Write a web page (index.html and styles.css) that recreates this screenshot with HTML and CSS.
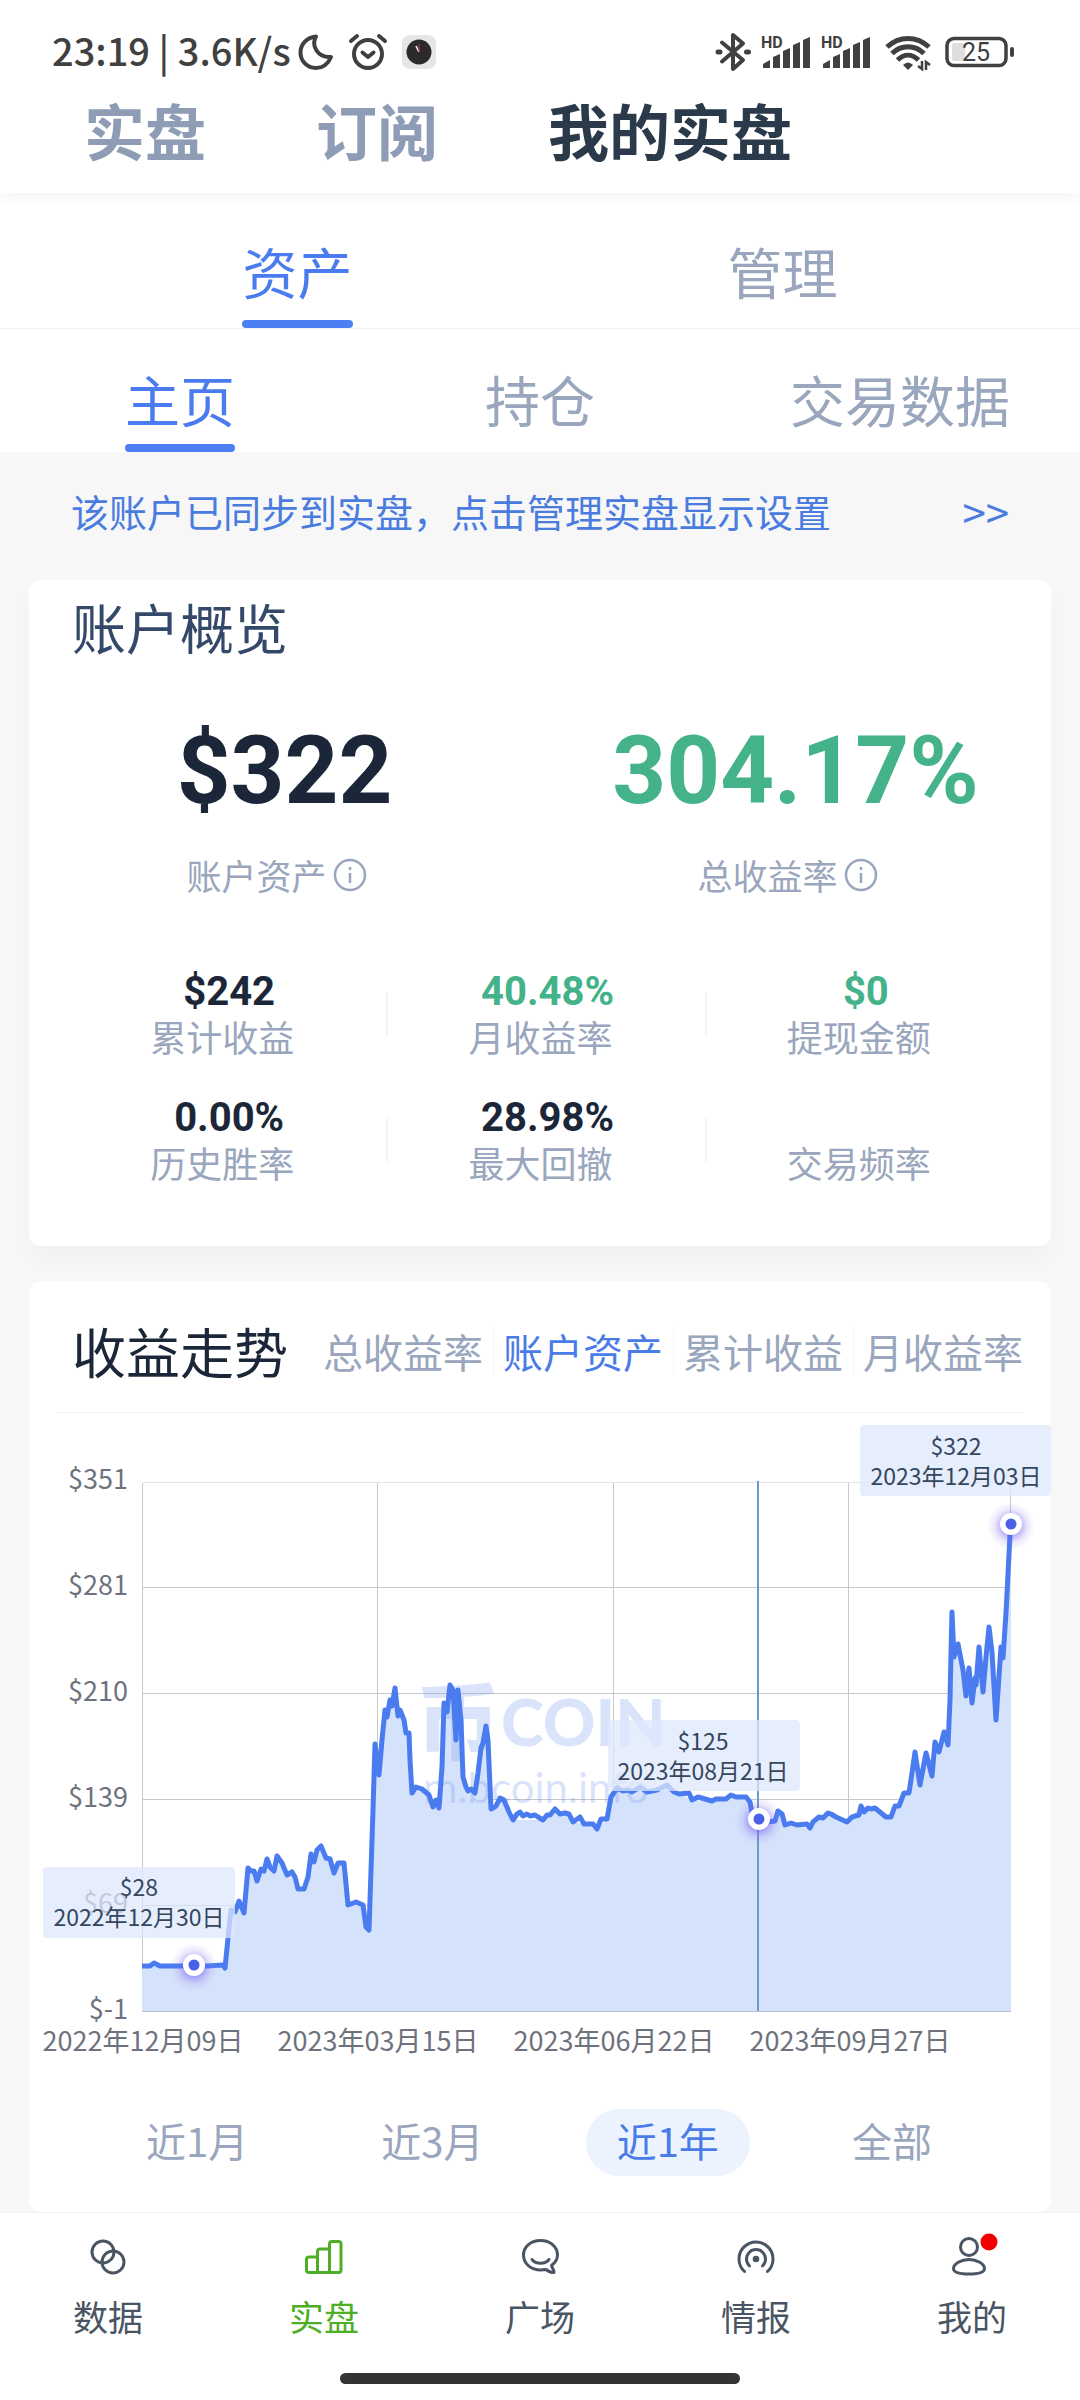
FILE: index.html
```html
<!DOCTYPE html>
<html lang="zh-CN">
<head>
<meta charset="utf-8">
<meta name="viewport" content="width=device-width, initial-scale=1">
<title>我的实盘</title>
<link rel="stylesheet" href="styles.css">
</head>
<body>
<header class="header">
  <div class="status">
    <span class="status-text">23:19 | 3.6K/s</span>
    <div class="status-left">
      <svg width="36" height="38" viewBox="0 0 36 38" fill="none" stroke="#404040" stroke-width="4" stroke-linejoin="round"><path d="M18 3.5C13 12 19 25 33 24C30 31 25 35 18 35C9 35 2.500 28 2.500 19.500C2.500 11 9 4.500 18 3.500Z"/></svg>
      <svg width="40" height="38" viewBox="0 0 40 38" fill="none" stroke="#404040" stroke-width="4" stroke-linecap="round" stroke-linejoin="round"><circle cx="20" cy="21" r="14"/><path d="M14.500 19.500L20 24L25.500 19.500M3 8L9 3M37 8L31 3"/></svg>
      <svg width="34" height="38" viewBox="0 0 34 38"><rect y="2" width="34" height="34" rx="8" fill="#e6e6e6"/><circle cx="17" cy="19" r="12.500" fill="#2c2a2a"/><path d="M17 19L14 13" stroke="#fff" stroke-width="1.500"/><path d="M17 19V11" stroke="#c33" stroke-width="1"/></svg>
    </div>
    <div class="status-right">
      <svg width="36" height="40" viewBox="0 0 36 40" fill="none" stroke="#404040" stroke-width="4" stroke-linecap="round" stroke-linejoin="round"><path d="M7 10.500L28 28L18 37V3L28 11.500L7 29.500"/><path d="M3 20H5M31.500 20H33.500" stroke-width="5"/></svg>
      <svg width="50" height="40" viewBox="0 0 50 40" fill="#404040"><text x="0" y="16" class="hd">HD</text><path d="M2 36V32L9 28V36ZM12 36V25L19 22V36ZM22 36V19L29 16V36ZM32 36V13L39 10V36ZM42 36V8L49 5V36Z"/></svg>
      <svg width="50" height="40" viewBox="0 0 50 40" fill="#404040"><text x="0" y="16" class="hd">HD</text><path d="M2 36V32L9 28V36ZM12 36V25L19 22V36ZM22 36V19L29 16V36ZM32 36V13L39 10V36ZM42 36V8L49 5V36Z"/></svg>
      <svg class="wifi" width="46" height="40" viewBox="0 0 46 40" fill="none" stroke="#404040" stroke-width="5"><path d="M2 15C14 3.500 32 3.500 44 15M7 21.500C16 12.500 30 12.500 39 21.500M12.500 28C19 21.500 27 21.500 33.500 28"/><path d="M23 38L18 33Q23 28 28 33Z" fill="#404040" stroke="none"/><path d="M37 29V37L33 34M41 38V30L45 33" stroke-width="2.500"/></svg>
      <svg width="70" height="40" viewBox="0 0 70 40"><rect x="2" y="6.500" width="59" height="27" rx="7" fill="none" stroke="#404040" stroke-width="3.500"/><rect x="7" y="11" width="13" height="18" rx="2" fill="#dedede"/><rect x="65" y="15" width="4" height="10" rx="2" fill="#404040"/><text x="31" y="29" text-anchor="middle" class="batt">25</text></svg>
    </div>
  </div>
  <nav class="sections">
    <button type="button">实盘</button>
    <button type="button">订阅</button>
    <button type="button" class="active">我的实盘</button>
  </nav>
</header>

<nav class="tabs tabs-main">
  <button type="button" class="active"><span>资产</span></button>
  <button type="button"><span>管理</span></button>
</nav>
<nav class="tabs tabs-sub">
  <button type="button" class="active"><span>主页</span></button>
  <button type="button"><span>持仓</span></button>
  <button type="button"><span>交易数据</span></button>
</nav>

<main>
  <a href="#" class="notice"><span>该账户已同步到实盘，点击管理实盘显示设置</span><span class="more">&gt;&gt;</span></a>

  <section class="card overview">
    <h2 class="card-title">账户概览</h2>
    <div class="hero">
      <div class="hero-item">
        <strong>$322</strong>
        <p>账户资产<svg width="34" height="34" viewBox="0 0 34 34" fill="none" stroke="#99a6bd" stroke-width="2.500"><circle cx="17" cy="17" r="15"/><path d="M17 15V25M17 9V12"/></svg></p>
      </div>
      <div class="hero-item up">
        <strong>304.17%</strong>
        <p>总收益率<svg width="34" height="34" viewBox="0 0 34 34" fill="none" stroke="#99a6bd" stroke-width="2.500"><circle cx="17" cy="17" r="15"/><path d="M17 15V25M17 9V12"/></svg></p>
      </div>
    </div>
    <div class="stats">
      <div class="stat"><strong>$242</strong><span>累计收益</span></div>
      <div class="stat up"><strong>40.48%</strong><span>月收益率</span></div>
      <div class="stat up"><strong>$0</strong><span>提现金额</span></div>
      <div class="stat"><strong>0.00%</strong><span>历史胜率</span></div>
      <div class="stat"><strong>28.98%</strong><span>最大回撤</span></div>
      <div class="stat"><strong></strong><span>交易频率</span></div>
    </div>
  </section>

  <section class="card trend">
    <div class="trend-head">
      <h2 class="trend-title">收益走势</h2>
      <div class="metrics">
        <button type="button">总收益率</button>
        <button type="button" class="active">账户资产</button>
        <button type="button">累计收益</button>
        <button type="button">月收益率</button>
      </div>
    </div>
    <hr>
    <svg class="chart" viewBox="29 1413 1022 660" role="img" aria-label="账户资产走势">
      <defs>
        <radialGradient id="glow"><stop offset="0.400" stop-color="#6a4ff0" stop-opacity="0.450"/><stop offset="0.700" stop-color="#7c68f2" stop-opacity="0.150"/><stop offset="1" stop-color="#8a7cf5" stop-opacity="0"/></radialGradient>
        <g id="dot"><circle cy="2" r="24" fill="url(#glow)"/><circle r="11" fill="#fff"/><circle r="5.500" fill="#4a60e6"/></g>
        <path id="series" d="M142 1966L150 1966L154 1963L160 1966L182 1966L207 1966L223 1965L225 1968L228 1938L231 1910L235 1912L239 1901L244 1913L248 1868L251 1871L254 1871L257 1881L261 1869L264 1871L267 1859L270 1867L274 1871L277 1856L282 1863L287 1875L292 1872L295 1877L298 1889L304 1889L308 1877L311 1854L314 1862L317 1850L321 1846L326 1858L330 1859L334 1873L338 1863L344 1863L348 1905L356 1902L363 1905L366 1927L369 1930L373 1810L375 1744L379 1775L382 1740L385 1710L387 1717L390 1700L392 1706L395 1688L398 1716L400 1710L404 1720L406 1733L409 1733L410 1760L412 1793L416 1787L422 1789L429 1795L433 1807L436 1800L439 1808L442 1767L444 1703L447 1712L450 1685L453 1690L456 1740L458 1690L461 1720L463 1777L466 1787L468 1791L471 1789L475 1793L478 1773L481 1748L483 1743L486 1726L488 1740L491 1809L496 1806L500 1798L504 1800L509 1812L513 1820L517 1814L520 1812L523 1816L527 1814L530 1816L535 1815L538 1817L543 1820L547 1815L550 1815L555 1809L560 1814L565 1813L569 1814L573 1822L580 1817L584 1824L593 1824L597 1829L601 1819L607 1819L611 1797L617 1788L623 1791L628 1790L632 1792L640 1787L647 1792L657 1790L667 1785L674 1792L679 1794L689 1793L692 1800L698 1797L712 1801L716 1799L726 1799L731 1795L736 1797L746 1797L750 1802L752 1813L758 1819L767 1822L775 1821L778 1811L782 1814L785 1825L791 1823L797 1825L807 1824L810 1828L813 1822L819 1817L823 1818L828 1813L831 1814L836 1817L847 1822L852 1817L859 1815L861 1806L864 1812L868 1808L871 1809L875 1808L886 1817L891 1817L895 1806L899 1806L904 1793L909 1793L912 1773L915 1752L920 1785L926 1753L932 1776L935 1742L939 1752L944 1732L948 1745L950 1700L951 1653L952 1612L954 1657L958 1644L963 1670L966 1696L969 1668L972 1703L975 1678L976 1685L979 1647L983 1692L986 1657L989 1627L992 1652L996 1720L1001 1647L1003 1658L1006 1613L1010 1535L1011 1524"/>
      </defs>
      <path class="grid" d="M142 1587.500H1011M142 1693.500H1011M142 1799.500H1011M142 1905.500H1011M142.500 1482V2011M377.500 1482V2011M613.500 1482V2011M848.500 1482V2011M1010.500 1482V2011"/>
      <path class="grid-top" d="M142 1482.500H1011"/>
      <path class="area" d="M142 1966L150 1966L154 1963L160 1966L182 1966L207 1966L223 1965L225 1968L228 1938L231 1910L235 1912L239 1901L244 1913L248 1868L251 1871L254 1871L257 1881L261 1869L264 1871L267 1859L270 1867L274 1871L277 1856L282 1863L287 1875L292 1872L295 1877L298 1889L304 1889L308 1877L311 1854L314 1862L317 1850L321 1846L326 1858L330 1859L334 1873L338 1863L344 1863L348 1905L356 1902L363 1905L366 1927L369 1930L373 1810L375 1744L379 1775L382 1740L385 1710L387 1717L390 1700L392 1706L395 1688L398 1716L400 1710L404 1720L406 1733L409 1733L410 1760L412 1793L416 1787L422 1789L429 1795L433 1807L436 1800L439 1808L442 1767L444 1703L447 1712L450 1685L453 1690L456 1740L458 1690L461 1720L463 1777L466 1787L468 1791L471 1789L475 1793L478 1773L481 1748L483 1743L486 1726L488 1740L491 1809L496 1806L500 1798L504 1800L509 1812L513 1820L543 1820L555 1809L569 1814L573 1822L584 1824L597 1829L607 1819L611 1797L617 1788L647 1792L667 1785L679 1794L692 1800L712 1801L731 1795L746 1797L752 1813L758 1819L775 1821L778 1811L785 1825L810 1828L828 1813L847 1822L861 1806L875 1808L886 1817L891 1817L895 1806L899 1806L904 1793L909 1793L915 1752L920 1785L926 1753L932 1776L935 1742L939 1752L944 1732L948 1745L950 1700L952 1612L954 1657L958 1644L966 1696L969 1668L972 1703L979 1647L983 1692L989 1627L992 1652L996 1720L1001 1647L1003 1658L1006 1613L1011 1524V2011H142Z"/>
      <path class="axis" d="M142 2011.500H1011"/>
      <g class="mark">
        <text x="416" y="1753" class="mark-cjk">币</text>
        <text x="501" y="1746" class="mark-logo">COIN</text>
        <text x="423" y="1803" class="mark-url">m.bcoin.info</text>
      </g>
      <use href="#series" class="line"/>
      <path class="cursor" d="M758 1481V2011"/>
      <g class="tick tick-y">
        <text x="128" y="1489">$351</text><text x="128" y="1595">$281</text><text x="128" y="1701">$210</text>
        <text x="128" y="1807">$139</text><text x="128" y="1913">$69</text><text x="128" y="2019">$-1</text>
      </g>
      <g class="tick tick-x">
        <text x="143" y="2051">2022年12月09日</text><text x="378" y="2051">2023年03月15日</text>
        <text x="614" y="2051">2023年06月22日</text><text x="850" y="2051">2023年09月27日</text>
      </g>
      <use href="#dot" x="194" y="1965"/><use href="#dot" x="759" y="1819"/><use href="#dot" x="1011" y="1524"/>
      <g class="tip">
        <rect x="43" y="1867" width="192" height="71" rx="4"/><text x="139" y="1896">$28</text><text x="139" y="1926">2022年12月30日</text>
        <rect x="608" y="1720" width="192" height="71" rx="4"/><text x="703" y="1750">$125</text><text x="703" y="1780">2023年08月21日</text>
        <rect x="860" y="1425" width="191" height="71" rx="4"/><text x="956" y="1455">$322</text><text x="956" y="1485">2023年12月03日</text>
      </g>
    </svg>
    <div class="ranges">
      <button type="button">近1月</button>
      <button type="button">近3月</button>
      <button type="button" class="active">近1年</button>
      <button type="button">全部</button>
    </div>
  </section>
</main>

<footer class="footer">
  <nav class="bottom-nav">
    <a href="#"><svg width="40" height="40" viewBox="0 0 40 40"><circle cx="15" cy="15" r="11"/><circle cx="25" cy="25" r="11"/></svg>数据</a>
    <a href="#" class="active"><svg width="40" height="40" viewBox="0 0 40 40"><path d="M13.500 35.500H5Q2.500 35.500 2.500 33V22.500Q2.500 20 5 20H13.500ZM13.500 35.500V14.500Q13.500 12 16 12H25.500V35.500ZM25.500 35.500V7Q25.500 4.500 28 4.500H34.500Q37 4.500 37 7V33Q37 35.500 34.500 35.500Z"/></svg>实盘</a>
    <a href="#"><svg width="40" height="40" viewBox="0 0 40 40"><path d="M31.500 28.500C35.500 25.500 37.500 22 37.500 18C37.500 9.500 30 3.500 20.500 3.500C11 3.500 3.500 9.500 3.500 18C3.500 27 11.500 33 20.500 33C22 33 24 32.500 26 32.500C29 35 31.500 35.500 34 35.500C35 33.500 32 31.500 31.500 28.500Z"/><path d="M12 22.500C16 27.500 25 27.500 29 22.500"/></svg>广场</a>
    <a href="#"><svg width="40" height="40" viewBox="0 0 40 40"><path d="M8.500 34.500A17 17 0 1 1 31.500 34.500M13.500 29A9.500 9.500 0 1 1 26.500 29"/><circle cx="20" cy="22" r="3.300" class="solid"/></svg>情报</a>
    <a href="#"><svg width="40" height="40" viewBox="0 0 40 40"><circle cx="17" cy="10" r="8.500"/><path d="M17 22.500C25 22.500 32.500 27 32.500 31.500C32.500 35.500 26 37 17 37C8 37 1.500 35.500 1.500 31.500C1.500 27 9 22.500 17 22.500Z"/><circle cx="37" cy="5" r="8.500" class="badge"/></svg>我的</a>
  </nav>
  <div class="home-bar"></div>
</footer>
</body>
</html>
```

FILE: styles.css
```css
* { box-sizing: border-box; }
body {
  margin: 0;
  background: #f7f7f7;
  color: #1b2738;
  font-family: "Noto Sans CJK SC", sans-serif;
}
button {
  margin: 0;
  padding: 0;
  border: 0;
  background: none;
  color: inherit;
  font: inherit;
  white-space: nowrap;
}
a { color: inherit; text-decoration: none; }
h2, p { margin: 0; font-weight: 400; }
svg { display: block; flex: none; overflow: visible; }

.header {
  position: relative;
  padding: 32px 0 15px;
  background: #fff;
  box-shadow: 0 4px 14px rgba(0, 0, 0, 0.05);
}
.status {
  display: flex;
  align-items: center;
  height: 40px;
  margin-bottom: 16px;
  padding: 0 65px 0 52px;
  color: #404040;
}
.status-text { font-size: 38px; font-weight: 500; line-height: 36px; height: 40px; white-space: nowrap; }
.status-left { display: flex; gap: 14px; margin-left: 7px; }
.status-right { display: flex; gap: 10px; margin-left: auto; }
.wifi { margin: 0 4px; }
.hd { font: 700 16px Roboto, sans-serif; }
.batt { font: 400 25px Roboto, sans-serif; fill: #404040; }

.sections { display: flex; gap: 110px; padding: 0 84px; }
.sections button { color: #8e9db5; font-size: 61px; font-weight: 700; line-height: 84px; height: 90px; padding-bottom: 6px; }
.sections .active { color: #2a3a4a; }

.tabs { display: flex; background: #fff; color: #99a6bd; }
.tabs button { flex: 1; display: flex; justify-content: center; font-size: 55px; }
.tabs span {
  display: flex;
  flex-direction: column;
  justify-content: flex-end;
  height: 100%;
  line-height: 80px;
}
.tabs span::after { content: ""; height: 8px; border-radius: 4px; }
.tabs .active { color: #4a7cf0; }
.tabs .active span::after { background: #4c7ff2; }
.tabs-main { height: 136px; padding: 0 55px; border-bottom: 1px solid #f0f0f0; }
.tabs-main span::after { margin-top: 10px; }
.tabs-sub { height: 123px; }
.tabs-sub span::after { margin-top: 6px; }

main { padding: 0 29px; }
.notice {
  display: flex;
  justify-content: space-between;
  padding: 34px 42px 44px;
  color: #4a7ce0;
  font-size: 38px;
  line-height: 50px;
}
.more { font-size: 42px; }

.card { border-radius: 12px; background: #fff; }
.overview { padding: 12px 0 58px; box-shadow: 0 14px 20px rgba(0, 0, 0, 0.025); }
.card-title { margin: 0 43px 54px; color: #34496a; font-size: 54px; line-height: 70px; }
.hero { display: flex; margin-bottom: 70px; }
.hero-item { flex: 1; text-align: center; }
.hero strong { display: block; margin-bottom: 24px; font: 700 94px/110px Roboto, sans-serif; }
.hero p {
  display: flex;
  align-items: center;
  justify-content: center;
  gap: 6px;
  padding-right: 16px;
  color: #99a6bd;
  font-size: 35px;
  line-height: 50px;
}
.stats { display: grid; grid-template-columns: repeat(3, 1fr); row-gap: 34px; margin: 0 26px 0 41px; }
.stat { display: grid; grid-template-rows: 44px 48px; text-align: center; }
.stat:not(:nth-child(3n)) { background: linear-gradient(#f4f4f6, #f4f4f6) no-repeat right 22px / 2px 44px; }
.stat strong { font: 700 40px/44px Roboto, sans-serif; }
.stat span { padding-right: 14px; color: #99a6bd; font-size: 36px; line-height: 44px; }
.up strong { color: #45b38a; }

.trend { margin-top: 35px; }
.trend-head { display: flex; align-items: center; justify-content: space-between; height: 131px; padding: 8px 18px 0 43px; }
.trend-title { font-size: 54px; line-height: 70px; }
.metrics { display: flex; color: #99a6bd; font-size: 40px; line-height: 50px; }
.metrics button { padding: 0 10px; }
.metrics button + button { background: linear-gradient(#f8f8f9, #f8f8f9) no-repeat left / 1px 100%; }
.metrics .active { color: #4a7ce8; }
hr { height: 1px; margin: 0 28px; border: 0; background: #f3f3f3; }

.chart { width: 100%; height: auto; }
.grid { stroke: #c6c8cc; }
.grid-top { stroke: #e3e4e8; }
.axis { stroke: #b3c0d8; }
.area { fill: #d5e2fb; }
.line { fill: none; stroke: #4a7cf0; stroke-width: 5; stroke-linejoin: round; }
.cursor { stroke: #6c9bc3; stroke-width: 2; }
.tick { fill: #6d727c; font-size: 27px; }
.tick-y { text-anchor: end; }
.tick-x, .tip { text-anchor: middle; }
.tip { font-size: 23px; fill: #34475e; }
.tip rect { fill: #dde7fc; fill-opacity: 0.75; }
.mark { fill: #7899eb; fill-opacity: 0.28; }
.mark-cjk { font-size: 84px; font-weight: 900; }
.mark-logo { font: 900 65px Lato, sans-serif; }
.mark-url { font: 400 42px Lato, sans-serif; }

.ranges { display: flex; justify-content: space-between; padding: 36px 88px 36px 86px; color: #99a6bd; font-size: 40px; }
.ranges button { height: 67px; padding: 0 31px 4px; border-radius: 34px; line-height: 63px; }
.ranges .active { background: #edf3fe; color: #4a7ce8; }

.footer { padding-bottom: 16px; border-top: 1px solid #f1f1f1; background: #fff; }
.bottom-nav { display: flex; padding-top: 24px; }
.bottom-nav a {
  flex: 1;
  display: flex;
  flex-direction: column;
  align-items: center;
  gap: 14px;
  color: #4a5564;
  font-size: 35px;
  line-height: 50px;
}
.bottom-nav svg { fill: none; stroke: currentColor; stroke-width: 3; stroke-linecap: round; stroke-linejoin: round; }
.bottom-nav .active { color: #4eae26; }
.bottom-nav .solid { fill: currentColor; stroke: none; }
.bottom-nav .badge { fill: #f00000; stroke: none; }
.home-bar { width: 37%; height: 11px; margin: 32px auto 0; border-radius: 6px; background: #333; }
```
